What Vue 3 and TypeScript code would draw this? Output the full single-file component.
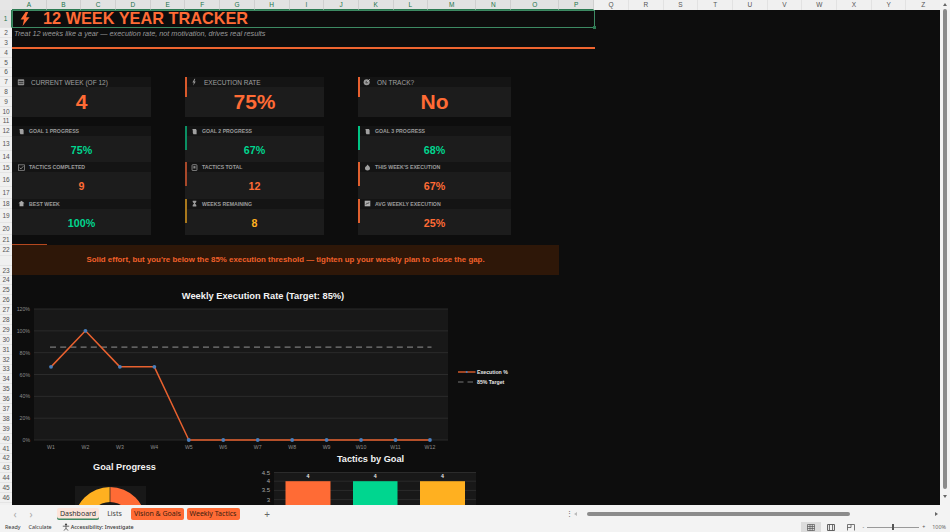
<script setup lang="ts">
interface Kpi { icon: string; label: string; value: string; color: string; accent?: string }

const columns: [string, number][] = [
  ['A', 34.7], ['B', 34.7], ['C', 34.7], ['D', 34.7], ['E', 34.7], ['F', 34.7], ['G', 34.7], ['H', 34.7],
  ['I', 34.7], ['J', 34.7], ['K', 34.7], ['L', 34.7], ['M', 48], ['N', 35], ['O', 48], ['P', 35],
  ['Q', 34.7], ['R', 34.7], ['S', 34.7], ['T', 34.7], ['U', 34.7], ['V', 34.7], ['W', 34.7], ['X', 34.7],
  ['Y', 34.7], ['Z', 34.7], ['', 20],
]
const selectedCols = 'ABCDEFGHIJKLMNOP'

const rows: [string, number][] = [
  ['1', 18.5], ['2', 10], ['3', 9.5], ['4', 10], ['5', 10], ['6', 9], ['7', 10], ['8', 10], ['9', 10], ['10', 10],
  ['11', 9], ['12', 11], ['13', 14], ['14', 12], ['15', 10], ['16', 14], ['17', 12], ['18', 10], ['19', 14], ['20', 12],
  ['21', 10], ['22', 11], ['', 10], ['23', 10], ['24', 9.9], ['25', 9.9], ['26', 9.9], ['27', 9.9], ['28', 9.9], ['29', 9.9],
  ['30', 9.9], ['31', 9.9], ['32', 9.9], ['33', 9.9], ['34', 9.9], ['35', 9.9], ['36', 9.9], ['37', 9.9], ['38', 9.9],
  ['39', 9.9], ['40', 9.9], ['41', 9.9], ['42', 9.9], ['43', 9.9], ['44', 9.9], ['45', 9.9], ['46', 9.9],
]

const orange = '#ff6b35'
const green = '#00d68f'
const amber = '#ffb020'

const topCards: Kpi[] = [
  { icon: 'calendar', label: 'CURRENT WEEK (OF 12)', value: '4', color: orange },
  { icon: 'bolt', label: 'EXECUTION RATE', value: '75%', color: orange, accent: '#d9592b' },
  { icon: 'target', label: 'ON TRACK?', value: 'No', color: orange, accent: '#e8602f' },
]
const smallCards: Kpi[] = [
  { icon: 'pin', label: 'GOAL 1 PROGRESS', value: '75%', color: green },
  { icon: 'pin', label: 'GOAL 2 PROGRESS', value: '67%', color: green, accent: '#0b8f63' },
  { icon: 'pin', label: 'GOAL 3 PROGRESS', value: '68%', color: green, accent: '#00c484' },
  { icon: 'check', label: 'TACTICS COMPLETED', value: '9', color: orange },
  { icon: 'clip', label: 'TACTICS TOTAL', value: '12', color: orange, accent: '#a8482a' },
  { icon: 'fire', label: "THIS WEEK'S EXECUTION", value: '67%', color: orange, accent: '#e0602f' },
  { icon: 'star', label: 'BEST WEEK', value: '100%', color: green },
  { icon: 'hourglass', label: 'WEEKS REMAINING', value: '8', color: amber, accent: '#a8781c' },
  { icon: 'chart', label: 'AVG WEEKLY EXECUTION', value: '25%', color: orange, accent: '#e0602f' },
]

// Line chart geometry, in the svg's own coordinates (x from sheet left, y from svg top).
const plot = { l: 22, r: 436, t: 6, b: 137 }
const yTicks = [120, 100, 80, 60, 40, 20, 0]
const yOf = (v: number) => plot.b - (v / 120) * (plot.b - plot.t)
const values = [67, 100, 67, 67, 0, 0, 0, 0, 0, 0, 0, 0]
const xOf = (i: number) => 39 + i * 34.45
const points = values.map((v, i) => ({ x: xOf(i), y: yOf(v), label: `W${i + 1}` }))
const linePath = points.map((p) => `${p.x},${p.y}`).join(' ')

const barTicks = [
  { label: '4.5', y: 0.5 },
  { label: '4', y: 9.2 },
  { label: '3.5', y: 18.4 },
  { label: '3', y: 27.6 },
]
const bars = [
  { x: 11.5, w: 45, color: orange },
  { x: 79, w: 44.5, color: green },
  { x: 146, w: 45, color: amber },
]
</script>

<template>
  <div class="app">
    <div class="main">
      <div class="workbook">
        <div class="colhead">
          <div class="corner"></div>
          <div
            v-for="[name, w] in columns"
            :key="name"
            class="col"
            :class="{ sel: name && selectedCols.includes(name) }"
            :style="{ width: w + 'px' }"
          >{{ name }}</div>
        </div>
        <div class="body">
          <div class="rowhead">
            <div
              v-for="([name, h], i) in rows"
              :key="i"
              class="row"
              :class="{ sel: name === '1' }"
              :style="{ height: h + 'px' }"
            >{{ name }}</div>
          </div>
          <div class="sheet">
            <div class="title-cell">
              <svg class="bolt" width="10" height="14" viewBox="0 0 10 14">
                <path d="M5.6 0 L0.6 7.6 L4 7.6 L2.6 14 L9.6 5.2 L6 5.2 L8.2 0 Z" fill="#ff6b35" />
              </svg>
              <span class="title">12 WEEK YEAR TRACKER</span>
              <i class="handle"></i>
            </div>
            <div class="subtitle">Treat 12 weeks like a year — execution rate, not motivation, drives real results</div>
            <div class="rule"></div>

            <div class="cards top">
              <div v-for="c in topCards" :key="c.label" class="card">
                <i v-if="c.accent" class="accent" :style="{ background: c.accent }"></i>
                <div class="card-head">
                  <svg class="ico" viewBox="0 0 10 10">
                    <g v-if="c.icon === 'calendar'">
                      <rect x="1" y="1.5" width="8" height="7.5" rx="1" fill="#8c8c8c" />
                      <rect x="2" y="4" width="6" height="1" fill="#222" />
                      <rect x="2" y="6" width="6" height="1" fill="#222" />
                    </g>
                    <path v-else-if="c.icon === 'bolt'" d="M5.6 1 L3 5.6 L4.8 5.6 L4 9.4 L7.2 4.4 L5.4 4.4 L6.6 1 Z" fill="#9a9a9a" />
                    <g v-else>
                      <circle cx="4.6" cy="5.4" r="3.8" fill="#9a9a9a" />
                      <circle cx="4.6" cy="5.4" r="1.5" fill="#5a5a5a" />
                      <path d="M5 5 L8.6 1.4" stroke="#bbb" stroke-width="1" />
                    </g>
                  </svg>
                  <span class="label">{{ c.label }}</span>
                </div>
                <div class="card-body big" :style="{ color: c.color }">{{ c.value }}</div>
              </div>
            </div>

            <div class="cards small">
              <div v-for="c in smallCards" :key="c.label" class="card">
                <i v-if="c.accent" class="accent" :style="{ background: c.accent }"></i>
                <div class="card-head">
                  <svg class="ico" viewBox="0 0 10 10">
                    <path v-if="c.icon === 'pin'" d="M2 1.5 H7 L8 3 V9 H3.5 L2.6 7 V4 Z" fill="#a0a0a0" />
                    <g v-else-if="c.icon === 'check'">
                      <rect x="0.8" y="1.2" width="8.4" height="7.8" fill="none" stroke="#9a9a9a" stroke-width="1" />
                      <path d="M2.4 5.4 L4.2 7 L7.6 3.2" fill="none" stroke="#b0b0b0" stroke-width="1" />
                    </g>
                    <g v-else-if="c.icon === 'clip'">
                      <rect x="1.5" y="1" width="7" height="8.4" rx="1" fill="none" stroke="#a0a0a0" stroke-width="1.1" />
                      <rect x="3.4" y="3" width="3" height="3.4" fill="#8a8a8a" />
                    </g>
                    <path v-else-if="c.icon === 'fire'" d="M5 0.8 C5.6 2.2 8.6 3.6 8.6 6.2 C8.6 8.2 7 9.4 5 9.4 C3 9.4 1.4 8.2 1.4 6.2 C1.4 4.6 2.4 3.8 3.2 3.2 C3.6 2.6 4.6 2 5 0.8 Z" fill="#a0a0a0" />
                    <path v-else-if="c.icon === 'star'" d="M5 1 L9.4 4.6 L7.8 4.6 L7.8 9 L2.2 9 L2.2 4.6 L0.6 4.6 Z" fill="#a8a8a8" />
                    <path v-else-if="c.icon === 'hourglass'" d="M2.4 1 H7.6 V3 L5.6 5 L7.6 7 V9.2 H2.4 V7 L4.4 5 L2.4 3 Z" fill="#9a9a9a" />
                    <g v-else>
                      <rect x="1" y="1" width="8" height="8" fill="#b0b0b0" />
                      <path d="M2.6 7 L4.4 4 L5.6 5.6 L7.4 2.8" fill="none" stroke="#333" stroke-width="0.9" />
                    </g>
                  </svg>
                  <span class="label tiny">{{ c.label }}</span>
                </div>
                <div class="card-body sm" :style="{ color: c.color }">{{ c.value }}</div>
              </div>
            </div>

            <div class="alert">
              <i class="alert-top"></i>
              Solid effort, but you're below the 85% execution threshold — tighten up your weekly plan to close the gap.
            </div>

            <div class="chart-title line-title">Weekly Execution Rate (Target: 85%)</div>
            <svg class="line-chart" width="590" height="146" viewBox="0 0 590 146">
              <rect :x="plot.l" :y="plot.t" :width="plot.r - plot.l" :height="plot.b - plot.t" fill="#181818" />
              <g v-for="t in yTicks" :key="t">
                <line :x1="plot.l" :x2="plot.r" :y1="yOf(t)" :y2="yOf(t)" stroke="#2b2b2b" stroke-width="1" />
                <text class="axis" :x="plot.l - 4" :y="yOf(t) + 2" text-anchor="end">{{ t }}%</text>
              </g>
              <line :x1="38" :x2="419.5" :y1="yOf(85)" :y2="yOf(85)" stroke="#7a7a7a" stroke-width="1.2" stroke-dasharray="6 4.2" />
              <polyline :points="linePath" fill="none" stroke="#e8612f" stroke-width="1.5" stroke-linejoin="round" />
              <g v-for="p in points" :key="p.label">
                <circle :cx="p.x" :cy="p.y" r="1.9" fill="#4a7ebb" />
                <text class="axis" :x="p.x" :y="plot.b + 8.5" text-anchor="middle">{{ p.label }}</text>
              </g>
              <line x1="446" x2="463.5" y1="69" y2="69" stroke="#f0652f" stroke-width="1.3" />
              <circle cx="454.7" cy="69" r="1" fill="#4a7ebb" />
              <text class="legend" x="465" y="71">Execution %</text>
              <line x1="446" x2="463.5" y1="79" y2="79" stroke="#777" stroke-width="1" stroke-dasharray="5.5 4" />
              <text class="legend" x="465" y="81">85% Target</text>
            </svg>

            <div class="lower">
              <div class="goal-chart">
                <div class="chart-title goal-title">Goal Progress</div>
                <svg class="lower-svg" width="100" height="40" viewBox="0 0 100 40">
                  <rect x="13" y="0" width="71" height="40" fill="#181818" />
                  <path d="M48 1 A36 36 0 0 1 84 37 L69 37 A21 21 0 0 0 48 16 Z" fill="#ff6b35" />
                  <path d="M48 1 A36 36 0 0 0 12 37 L27 37 A21 21 0 0 1 48 16 Z" fill="#ffb020" />
                  <line x1="48" x2="48" y1="1" y2="16" stroke="#3a3020" stroke-width="0.8" />
                </svg>
              </div>
              <div class="bar-chart">
                <div class="chart-title bar-title">Tactics by Goal</div>
                <svg class="lower-svg" width="240" height="40" viewBox="0 0 240 40">
                  <g transform="translate(34 0)">
                    <rect x="0" y="0" width="202" height="40" fill="#181818" />
                    <g v-for="t in barTicks" :key="t.label">
                      <line x1="0" x2="202" :y1="t.y" :y2="t.y" stroke="#2b2b2b" stroke-width="1" />
                      <text class="axis light" x="-4" :y="t.y + 2" text-anchor="end">{{ t.label }}</text>
                    </g>
                    <g v-for="b in bars" :key="b.x">
                      <rect :x="b.x" y="9.2" :width="b.w" height="31" :fill="b.color" />
                      <text class="legend" :x="b.x + b.w / 2" y="5.5" text-anchor="middle">4</text>
                    </g>
                  </g>
                </svg>
              </div>
            </div>
          </div>
        </div>
      </div>
      <div class="vscroll">
        <span class="tri up"></span>
        <div class="vthumb"></div>
        <span class="tri down"></span>
      </div>
    </div>

    <div class="tabbar">
      <span class="nav">‹</span>
      <span class="nav second">›</span>
      <span class="tab active">Dashboard</span>
      <span class="tab plain">Lists</span>
      <span class="tab colored">Vision &amp; Goals</span>
      <span class="tab colored">Weekly Tactics</span>
      <span class="plus">+</span>
      <span class="dots">⋮</span>
      <span class="tri left"></span>
      <div class="hscroll"><div class="hthumb"></div></div>
      <span class="tri right"></span>
    </div>

    <div class="status">
      <span>Ready</span>
      <span class="calc">Calculate</span>
      <svg class="person" width="8" height="8" viewBox="0 0 10 10">
        <circle cx="5" cy="2" r="1.4" fill="#444" />
        <path d="M1 4 H9 M5 4 V6.5 M5 6.5 L2.5 9.5 M5 6.5 L7.5 9.5" stroke="#444" stroke-width="1" fill="none" />
      </svg>
      <span class="access">Accessibility: Investigate</span>
      <div class="views">
        <span class="view on">
          <svg width="8" height="7" viewBox="0 0 8 7"><path d="M0.5 0.5 H7.5 V6.5 H0.5 Z M0.5 2.5 H7.5 M0.5 4.5 H7.5 M3 0.5 V6.5 M5.3 0.5 V6.5" fill="none" stroke="#555" stroke-width="0.7" /></svg>
        </span>
        <span class="view">
          <svg width="8" height="7" viewBox="0 0 8 7"><path d="M0.5 0.5 H7.5 V6.5 H0.5 Z M2.4 0.5 V6.5 M5.6 0.5 V6.5" fill="none" stroke="#555" stroke-width="0.9" /></svg>
        </span>
        <span class="view">
          <svg width="8" height="7" viewBox="0 0 8 7"><path d="M0.5 6.5 V0.5 H7.5 V6.5 M4 0.5 V3.5 H0.5" fill="none" stroke="#555" stroke-width="0.8" /></svg>
        </span>
      </div>
      <div class="zoom">
        <span>-</span>
        <div class="slider"><i></i></div>
        <span>+</span>
      </div>
      <span class="pct">100%</span>
    </div>
  </div>
</template>

<style>
html, body { margin: 0; background: #f3f3f3; overflow: hidden; }
</style>

<style scoped>
.app {
  width: 950px;
  height: 532px;
  display: flex;
  flex-direction: column;
  overflow: hidden;
  font-family: "Liberation Sans", Arial, sans-serif;
  background: #f3f3f3;
}
.main { height: 505px; display: flex; flex: none; }
.workbook { width: 940px; display: flex; flex-direction: column; overflow: hidden; }
.colhead { height: 9.5px; flex: none; display: flex; background: #f0f0f0; overflow: hidden; }
.corner { width: 12px; flex: none; background: #e6e6e6; }
.col {
  flex: none;
  font-size: 6.5px;
  line-height: 9.5px;
  text-align: center;
  color: #555;
  box-sizing: border-box;
  border-right: 1px solid #e2e2e2;
}
.col.sel { background: #e2e2e2; color: #21734a; border-right-color: #cfcfcf; border-bottom: 1px solid #2d7a52; }
.body { flex: 1; display: flex; min-height: 0; }
.rowhead { width: 12px; flex: none; background: #f0f0f0; overflow: hidden; }
.row {
  font-size: 6.5px;
  color: #555;
  display: flex;
  align-items: center;
  justify-content: center;
  box-sizing: border-box;
  border-bottom: 1px solid #e4e4e4;
}
.row.sel { background: #e2e2e2; color: #21734a; border-right: 1px solid #2d7a52; }
.sheet { flex: 1; background: #0d0d0d; overflow: hidden; min-width: 0; }

.title-cell {
  position: relative;
  width: 582.7px;
  height: 18.5px;
  box-sizing: border-box;
  border: 1px solid #3d8a63;
  display: flex;
  align-items: center;
  padding-left: 7px;
  gap: 13px;
}
.handle { position: absolute; right: -2px; bottom: -2px; width: 3px; height: 3px; background: #2d7a52; }
.bolt { flex: none; }
.title { font-size: 16.3px; font-weight: 700; color: #ff6b35; white-space: nowrap; }
.subtitle { font-size: 7.27px; font-style: italic; color: #9a9a9a; padding: 1px 0 0 2px; height: 17px; box-sizing: border-box; line-height: 9px; white-space: nowrap; }
.rule { width: 582.7px; height: 1.5px; background: #ef6530; margin-top: 2px; }

.cards { display: grid; column-gap: 34px; }
.cards.top { grid-template-columns: 139px 139px 153px; margin-top: 28.5px; }
.cards.small { grid-template-columns: 139px 139px 153px; margin-top: 9px; }
.card { position: relative; background: #1c1c1c; display: flex; flex-direction: column; }
.accent { position: absolute; left: 0; top: 0; width: 1.5px; height: 20px; }
.small .accent { height: 24px; }
.card-head { display: flex; align-items: center; background: #141414; height: 10px; padding-left: 5px; }
.small .card-head { padding-left: 6px; }
.small .card { height: 36.3px; }
.top .card { height: 40px; }
.ico { width: 8px; height: 8px; flex: none; margin-right: 6px; }
.small .ico { width: 7px; height: 7px; margin-right: 4px; }
.label { font-size: 6.5px; color: #a0a0a0; white-space: nowrap; }
.label.tiny { font-size: 5.2px; font-weight: 700; color: #9c9c9c; }
.card-body { flex: 1; display: flex; align-items: center; justify-content: center; font-weight: 700; }
.big { font-size: 21px; }
.sm { font-size: 10.7px; padding-top: 2px; }

.alert {
  position: relative;
  width: 547px;
  height: 30px;
  margin-top: 10px;
  background: #2e1708;
  color: #f0602a;
  font-size: 7.9px;
  font-weight: 700;
  display: flex;
  align-items: center;
  justify-content: center;
}
.alert-top { position: absolute; left: 0; top: -1px; width: 35px; height: 1px; background: #b5481f; }

.chart-title { color: #f2f2f2; font-weight: 700; white-space: nowrap; line-height: 12px; }
.line-title { font-size: 9.3px; width: 502px; text-align: center; padding-top: 15px; height: 28px; box-sizing: border-box; }
.line-chart { display: block; overflow: visible; }
.axis { font-size: 5.2px; fill: #8c8c8c; font-family: "Liberation Sans", Arial, sans-serif; }
.axis.light { font-size: 6px; fill: #a8a8a8; }
.legend { font-size: 5.2px; font-weight: 700; fill: #e8e8e8; font-family: "Liberation Sans", Arial, sans-serif; }

.lower { display: flex; height: 60px; overflow: hidden; }
.goal-chart { width: 186px; padding-left: 50px; box-sizing: border-box; flex: none; }
.goal-title { font-size: 9.2px; width: 125px; text-align: center; padding-top: 12px; height: 37px; box-sizing: border-box; }
.bar-chart { width: 270px; flex: none; margin-left: 42px; }
.bar-title { font-size: 9.2px; width: 261px; text-align: center; padding-top: 4px; height: 23.5px; box-sizing: border-box; }
.lower-svg { display: block; overflow: visible; }

.vscroll { width: 10px; flex: none; background: #f3f3f3; display: flex; flex-direction: column; align-items: center; padding-top: 3px; box-sizing: border-box; }
.vthumb { width: 4px; height: 480px; background: #8b8b8b; border-radius: 2px; margin: 3px 0 6px; }
.tri { width: 0; height: 0; display: block; flex: none; }
.tri.up { border: 2.5px solid transparent; border-top: 0; border-bottom: 3px solid #666; }
.tri.down { border: 2.5px solid transparent; border-bottom: 0; border-top: 3px solid #666; }
.tri.left { border: 2.5px solid transparent; border-left: 0; border-right: 3px solid #bbb; margin-left: 4px; }
.tri.right { border: 2.5px solid transparent; border-right: 0; border-left: 3px solid #666; }

.tabbar { height: 17px; flex: none; display: flex; align-items: center; font-family: "Noto Sans", "Open Sans", sans-serif; font-size: 7px; color: #444; position: relative; }
.nav { width: 16px; text-align: center; color: #aaa; font-size: 10px; line-height: 10px; }
.nav:first-child { margin-left: 7px; }
.nav.second { margin-right: 18px; }
.tab { display: block; white-space: nowrap; height: 12px; line-height: 12px; text-align: center; box-sizing: border-box; margin-right: 2.5px; }
.tab.active { width: 42px; background: #fde4da; color: #333; box-shadow: inset 0 -1.5px #3d8a63; margin-right: 7px; border-radius: 2px; }
.tab.plain { width: 17px; margin-right: 8px; }
.tab.colored { width: 53px; background: #ff6b35; color: #3a2010; border-radius: 2px; }
.plus { margin-left: 20px; color: #666; font-size: 10px; width: 10px; text-align: center; }
.dots { margin-left: 294px; color: #666; font-size: 7px; width: 4px; }
.hscroll { width: 350px; height: 4px; margin: 0 4px; padding-left: 6px; box-sizing: border-box; }
.hthumb { width: 263px; height: 4px; background: #8b8b8b; border-radius: 2px; }

.status { height: 10px; flex: none; display: flex; align-items: center; font-family: "Noto Sans", "Open Sans", sans-serif; font-size: 5.4px; color: #333; padding-left: 5px; }
.calc { margin-left: 8px; }
.person { margin-left: 10px; margin-right: 1px; }
.access { font-weight: 500; }
.views { display: flex; margin-left: auto; }
.view { width: 20px; height: 10px; display: flex; align-items: center; justify-content: center; }
.view.on { background: #dcdcdc; }
.zoom { display: flex; align-items: center; gap: 3px; margin-left: 1px; color: #555; }
.slider { width: 52px; height: 1px; background: #999; position: relative; }
.slider i { position: absolute; left: 25px; top: -2.5px; width: 2px; height: 6px; background: #555; }
.pct { margin: 0 4px 0 7px; color: #666; }
</style>
